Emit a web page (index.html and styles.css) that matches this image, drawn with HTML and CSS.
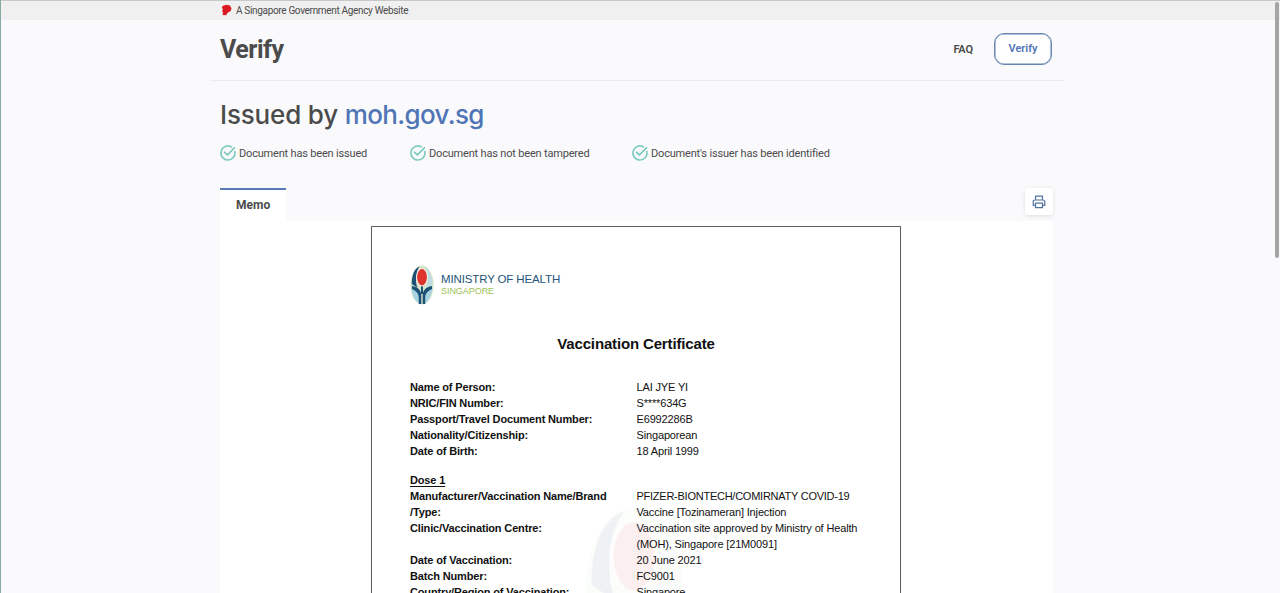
FILE: index.html
```html
<!DOCTYPE html>
<html lang="en">
<head>
<meta charset="utf-8">
<title>Verify</title>
<link rel="stylesheet" href="styles.css">
</head>
<body>
<svg class="defs" width="0" height="0">
  <symbol id="tick" viewBox="0 0 16 16">
    <path d="M14.800 6.500A7 7 0 1 1 11.400 1.900" fill="none" stroke="#80ccc2" stroke-width="1.700" stroke-linecap="round"/>
    <path d="M4.600 7.200l2.800 2.800L14.500 2.800" fill="none" stroke="#70c5b9" stroke-width="1.600" stroke-linecap="round" stroke-linejoin="round"/>
  </symbol>
  <symbol id="emblem" viewBox="0 0 24 40">
    <ellipse cx="12" cy="20" rx="11.600" ry="19.400" fill="#d5e6c9"/>
    <path d="M9.500 1.500C4 3.500 1.800 11 1.800 19L7.500 23C5.500 18 5 8 9.500 1.500Z" fill="#1c5076"/>
    <path d="M14 1.500C20 4 22.500 12 22.300 20L16 24C19 17 19 7 14 1.500Z" fill="#bddde0"/>
    <path d="M1.500 22C5 23 9.500 26 9.700 30V38.500C5 36 2 30 1.500 22Z" fill="#a8d3e3"/>
    <path d="M22.500 22C19 23 14.800 26 14.500 30V38.500C19 36 22 30 22.500 22Z" fill="#a8d3e3"/>
    <path d="M2 21C8 22 11.300 25 11.300 31V39H8.800V33C8.800 28 6 26 2 24ZM22 21C16 22 12.700 25 12.700 31V39H15.200V33C15.200 28 18 26 22 24Z" fill="#1c5076"/>
    <path d="M11 20H13V29H11Z" fill="#1c5076"/>
    <ellipse cx="12" cy="12.200" rx="5.800" ry="9.200" fill="#f7eee9"/>
    <ellipse cx="12" cy="12.300" rx="4.900" ry="8.200" fill="#de342c"/>
  </symbol>
</svg>
<div class="page">
  <div class="gov-bar">
    <svg class="lion" viewBox="0 0 12 12"><path d="M2 1.300L6 .3 9.800 1.200 11.400 4 10.600 7.200 7.600 8.600 5.500 11.700 1.600 11.500 2.300 9 1.200 7.300 2 5.300 .8 3.400Z" fill="#df1921"/><path d="M2.500 5.500L5 6 3.500 8" stroke="#a7292c" stroke-width=".7" fill="none"/></svg>
    <span class="gov-text">A Singapore Government Agency Website</span>
  </div>
  <header class="header">
    <div class="brand">Verify</div>
    <nav class="nav"><a class="faq">FAQ</a><a class="verify-button">Verify</a></nav>
  </header>
  <main class="main">
    <h1 class="issuer">Issued by <span class="domain">moh.gov.sg</span></h1>
    <div class="checks">
      <div class="check"><svg class="tick"><use href="#tick"/></svg><span>Document has been issued</span></div>
      <div class="check"><svg class="tick"><use href="#tick"/></svg><span>Document has not been tampered</span></div>
      <div class="check"><svg class="tick"><use href="#tick"/></svg><span>Document's issuer has been identified</span></div>
    </div>
    <div class="tab-row">
      <div class="tab">Memo</div>
      <button class="print" aria-label="Print"><svg viewBox="0 0 14 14" width="14" height="14" fill="none" stroke="#51719f" stroke-width="1.200" stroke-linejoin="round"><path d="M3.500 5V1.200h7V5M3.500 10.300H1.200V7q0-2 2-2h7.600q2 0 2 2v3.300h-2.300M3.500 8.200h7v4.500h-7Z"/></svg></button>
    </div>
    <section class="viewer">
      <article class="certificate">
        <svg class="watermark"><use href="#emblem"/></svg>
        <div class="ministry"><svg class="emblem"><use href="#emblem"/></svg>
          <div class="ministry-text"><div class="ministry-name">MINISTRY OF HEALTH</div><div class="ministry-country">SINGAPORE</div></div>
        </div>
        <h2 class="cert-title">Vaccination Certificate</h2>
        <dl class="fields">
          <dt>Name of Person:</dt><dd>LAI JYE YI</dd>
          <dt>NRIC/FIN Number:</dt><dd>S****634G</dd>
          <dt>Passport/Travel Document Number:</dt><dd>E6992286B</dd>
          <dt>Nationality/Citizenship:</dt><dd>Singaporean</dd>
          <dt>Date of Birth:</dt><dd>18 April 1999</dd>
        </dl>
        <h3 class="dose">Dose 1</h3>
        <dl class="fields">
          <dt>Manufacturer/Vaccination Name/Brand<br>/Type:</dt><dd><span class="product">PFIZER-BIONTECH/COMIRNATY COVID-19</span><br>Vaccine [Tozinameran] Injection</dd>
          <dt>Clinic/Vaccination Centre:</dt><dd>Vaccination site approved by Ministry of Health<br>(MOH), Singapore [21M0091]</dd>
          <dt>Date of Vaccination:</dt><dd>20 June 2021</dd>
          <dt>Batch Number:</dt><dd>FC9001</dd>
          <dt>Country/Region of Vaccination:</dt><dd>Singapore</dd>
        </dl>
      </article>
    </section>
  </main>
  <div class="scroll-thumb"></div>
</div>
</body>
</html>
```
FILE: styles.css
```css
* { box-sizing: border-box; }
body { margin: 0; overflow: hidden; font-family: Roboto, sans-serif; color: #4b4b4b; }
.defs { position: absolute; }
.page { position: relative; height: 593px; overflow: hidden; background: #fafafc; border-left: 1px solid #88a8a3; }
.gov-bar { display: flex; align-items: center; height: 20px; padding: 0 0 1px 220px; gap: 4px; background: #f0f0f0; border-top: 1px solid #c9c9c9; font-size: 10px; letter-spacing: -.33px; }
.lion { width: 11px; height: 12px; }
.gov-text { white-space: nowrap; }
.header { display: flex; align-items: center; justify-content: space-between; width: 854px; height: 61px; margin-left: 209px; padding: 0 12px 3px 10px; border-bottom: 1px solid #ececef; }
.brand { padding-top: 2px; font-size: 25px; font-weight: 700; line-height: 30px; letter-spacing: -.5px; }
.nav { display: flex; align-items: center; gap: 21px; font-size: 11px; font-weight: 600; }
.faq { padding-top: 1px; letter-spacing: -.1px; }
.verify-button { display: flex; align-items: center; justify-content: center; width: 58px; height: 32px; border: 1.500px solid #6985b2; border-radius: 10px; background: #fff; color: #5075b5; box-shadow: inset 0 0 0 .5px #6985b2; }
.main { width: 833px; margin-left: 219px; }
.issuer { margin: 0; padding-top: 16px; height: 64px; font: 450 26px/36px Inter, sans-serif; letter-spacing: -.17px; white-space: nowrap; }
.domain { color: #5075b5; letter-spacing: -.65px; }
.checks { display: flex; height: 16px; font-size: 11px; letter-spacing: -.18px; }
.check { display: flex; align-items: center; gap: 3px; white-space: nowrap; }
.check:nth-child(1) { width: 190px; }
.check:nth-child(2) { width: 222px; }
.tick { width: 16px; height: 16px; }
.tab-row { display: flex; justify-content: space-between; height: 60px; padding-top: 27px; }
.tab { width: 66px; height: 33px; padding: 8px 16px 0; border-top: 2px solid #5a7ab4; background: #fff; font-size: 12px; line-height: 14px; font-weight: 700; }
.print { display: flex; align-items: center; justify-content: center; width: 28px; height: 27px; padding: 0; border: 0; border-radius: 3px; background: #fff; box-shadow: 0 1px 4px #0000001c; position: relative; }
.viewer { padding: 5px 0 0 151px; height: 372px; background: #fff; }
.certificate { position: relative; width: 530px; height: 600px; padding: 38px; border: 1px solid #5e5e5e; font: 11px/16px "Liberation Sans", Arial, sans-serif; color: #111; letter-spacing: -.15px; }
.watermark { position: absolute; left: 212px; top: 278px; width: 100px; height: 167px; opacity: .07; }
.ministry { display: flex; height: 40px; gap: 7px; }
.emblem { width: 24px; height: 40px; }
.ministry-text { padding-top: 7px; }
.ministry-name { font-size: 11.500px; line-height: 14px; letter-spacing: -.13px; color: #24557c; white-space: nowrap; }
.ministry-country { font-size: 9px; line-height: 11px; letter-spacing: -.05px; color: #9cc255; }
.cert-title { margin: 29px 0 25px; font-size: 15px; line-height: 20px; text-align: center; }
.fields { display: grid; grid-template-columns: 226.500px 1fr; margin: 0; position: relative; }
dt { font-weight: 700; white-space: nowrap; }
dd { margin: 0; white-space: nowrap; }
.product { letter-spacing: -.25px; }
.dose { margin: 13px 0 0; font-size: 11px; line-height: 16px; text-decoration: underline; text-underline-offset: 2px; }
.scroll-thumb { position: absolute; right: 1px; top: 2px; width: 4px; height: 256px; border-radius: 2px; background: #a5a5a5; }
```
